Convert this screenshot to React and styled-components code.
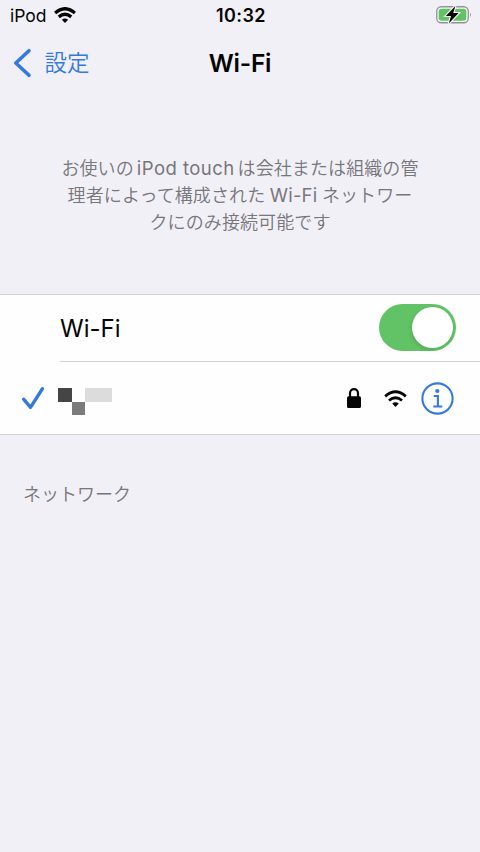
import styled, { createGlobalStyle, css } from 'styled-components';
import React from 'react';

const colors = {
  background: '#f1f0f6',
  blue: '#3479de',
  green: '#62c366',
  grey: '#77767b',
  line: '#d3d3d6'
};

const GlobalStyle = createGlobalStyle`
  * {
    box-sizing: border-box;
  }

  body {
    margin: 0;
    background: ${colors.background};
    color: #050505;
    font-family: Inter, 'Noto Sans CJK JP', sans-serif;
  }

  svg {
    display: block;
    flex: none;
  }
`;

const Screen = styled.div`
  display: flex;
  flex-direction: column;
  height: 852px;
  overflow: hidden;
`;

const columns = css`
  display: grid;
  grid-template-columns: 1fr auto 1fr;
  align-items: center;
`;

const StatusBar = styled.header`
  ${columns};
  height: 30px;
  padding: 0 8px 0 10px;
`;

const Carrier = styled.div`
  display: flex;
  align-items: center;
  gap: 7px;
  font-size: 17.5px;
`;

const Clock = styled.time`
  font-size: 18px;
  font-weight: 600;
  letter-spacing: 0.4px;
`;

const BatterySlot = styled.div`
  justify-self: end;
`;

const NavBar = styled.nav`
  ${columns};
  height: 67px;
  padding: 0 12px;
`;

const Back = styled.a`
  display: flex;
  align-items: center;
  gap: 12.5px;
  padding-bottom: 1px;
  color: ${colors.blue};
  font-size: 22.5px;
  font-weight: 350;
  line-height: 30px;
`;

const Title = styled.h1`
  margin: 0;
  padding-bottom: 1px;
  font-size: 24.5px;
  font-weight: 600;
  letter-spacing: -0.2px;
`;

const Note = styled.p`
  margin: 58px 0 58px;
  color: ${colors.grey};
  font-size: 18px;
  font-weight: 350;
  letter-spacing: 0.1px;
  line-height: 27px;
  text-align: center;
  white-space: nowrap;
`;

const Latin = styled.span`
  margin: 0 ${({ $gap }) => $gap}px;
  font-size: 18.5px;
  font-weight: 400;
  letter-spacing: ${({ $spacing }) => $spacing || 0}px;
`;

const Line = styled.span`
  display: block;
`;

const List = styled.section`
  border: solid ${colors.line};
  border-width: 1px 0;
  background: #fefefe;
`;

const SwitchRow = styled.div`
  display: flex;
  align-items: center;
  justify-content: space-between;
  height: 67px;
  margin-left: 60px;
  padding-right: 24px;
  border-bottom: 1px solid ${colors.line};
  font-size: 24px;
`;

const Toggle = styled.button`
  display: flex;
  justify-content: flex-end;
  width: 77px;
  height: 47px;
  margin-bottom: 1px;
  padding: 3px;
  border: 0;
  border-radius: 24px;
  background: ${colors.green};
`;

const Knob = styled.span`
  width: 41px;
  height: 41px;
  border-radius: 50%;
  background: #fff;
  box-shadow: -1px 2px 4px rgba(0, 0, 0, 0.12);
`;

const NetworkRow = styled.div`
  display: flex;
  align-items: center;
  height: 72px;
  padding: 0 26px 0 21px;
`;

const HiddenName = styled.div`
  display: grid;
  grid-template-columns: 14px 13px 27px;
  grid-template-rows: 14px 13px;
  margin: 7px auto 0 13px;
`;

const Block = styled.span`
  grid-column: ${({ $column }) => $column};
  grid-row: ${({ $row }) => $row};
  background: ${({ $color }) => $color};
`;

const NetworkIcons = styled.div`
  display: flex;
  align-items: center;
`;

const WifiSlot = styled.div`
  margin: 0 14px 0 23px;
`;

const SectionLabel = styled.h2`
  margin: 46px 0 0 23px;
  color: ${colors.grey};
  font-size: 18px;
  font-weight: 350;
  line-height: 27px;
`;

const WifiIcon = ({ width, height, stroke }) => (
  <svg width={width} height={height} viewBox="0 0 24 17" preserveAspectRatio="none">
    <g fill="none" stroke="#050505" strokeWidth={stroke}>
      <path d="M1.2 6.4 Q12-2.8 22.8 6.4" />
      <path d="M5.2 10.5 Q12 4.9 18.8 10.5" />
    </g>
    <path d="M8.6 13.5 Q12 10.9 15.4 13.5 L12 17Z" fill="#050505" />
  </svg>
);

const BatteryIcon = () => (
  <svg width="36" height="20" viewBox="0 0 36 20">
    <rect x="0.75" y="1.75" width="31.5" height="16" rx="4.5" fill="#f8f8fa" stroke="#929296" strokeWidth="1.3" />
    <rect x="2.7" y="3.7" width="27.6" height="12.1" rx="2.7" fill={colors.green} />
    <path d="M34 7.2 Q35.8 9.7 34 12.2Z" fill="#929296" />
    <path
      d="M19.4 1 9.8 10.9h5.2l-2.2 7.6 9.8-10.4h-5.4Z"
      fill="#050505"
      stroke="#f8f8fa"
      strokeWidth="2.2"
      paintOrder="stroke"
    />
  </svg>
);

const BackIcon = () => (
  <svg width="20" height="30" viewBox="0 0 20 30" fill="none" stroke={colors.blue} strokeWidth="3.6" strokeLinecap="round" strokeLinejoin="round">
    <path d="M17 2.7 3.8 15 17 27.3" />
  </svg>
);

const CheckIcon = () => (
  <svg width="24" height="24" viewBox="0 0 24 24" fill="none" stroke={colors.blue} strokeWidth="3.4" strokeLinecap="round" strokeLinejoin="round">
    <path d="M2.6 13.2 9.5 21.3 21.5 2.7" />
  </svg>
);

const LockIcon = () => (
  <svg width="14" height="20" viewBox="0 0 14 20">
    <path d="M3 9V5.2a4 4 0 0 1 8 0V9" fill="none" stroke="#050505" strokeWidth="2.2" />
    <rect y="8.3" width="14" height="11.7" rx="1.6" fill="#050505" />
  </svg>
);

const InfoIcon = () => (
  <svg width="33" height="33" viewBox="0 0 33 33" fill="none" stroke={colors.blue} strokeWidth="2.1">
    <circle cx="16.5" cy="16.5" r="15.1" />
    <circle cx="16.3" cy="9" r="2.1" fill={colors.blue} stroke="none" />
    <path d="M12.8 14h4.1v10.5M12.3 24.5h9" />
  </svg>
);

const App = () => (
  <Screen>
    <GlobalStyle />
    <StatusBar>
      <Carrier>
        iPod
        <WifiIcon width={22} height={16} stroke={3.5} />
      </Carrier>
      <Clock>10:32</Clock>
      <BatterySlot>
        <BatteryIcon />
      </BatterySlot>
    </StatusBar>
    <NavBar>
      <Back>
        <BackIcon />
        設定
      </Back>
      <Title>Wi-Fi</Title>
    </NavBar>
    <Note>
      <Line>
        お使いの<Latin $gap={3} $spacing={0.45}>iPod touch</Latin>は会社または組織の管
      </Line>
      <Line>
        理者によって構成された<Latin $gap={4.5} $spacing={0.2}>Wi-Fi</Latin>ネットワー
      </Line>
      <Line>クにのみ接続可能です</Line>
    </Note>
    <List>
      <SwitchRow>
        Wi-Fi
        <Toggle role="switch" aria-checked="true" aria-label="Wi-Fi">
          <Knob />
        </Toggle>
      </SwitchRow>
      <NetworkRow>
        <CheckIcon />
        <HiddenName>
          <Block $column="1" $row="1" $color="#454545" />
          <Block $column="2" $row="2" $color="#7b7b7b" />
          <Block $column="3" $row="1" $color="#dcdcdc" />
        </HiddenName>
        <NetworkIcons>
          <LockIcon />
          <WifiSlot>
            <WifiIcon width={23} height={17} stroke={2.8} />
          </WifiSlot>
          <InfoIcon />
        </NetworkIcons>
      </NetworkRow>
    </List>
    <SectionLabel>ネットワーク</SectionLabel>
  </Screen>
);

export default App;
